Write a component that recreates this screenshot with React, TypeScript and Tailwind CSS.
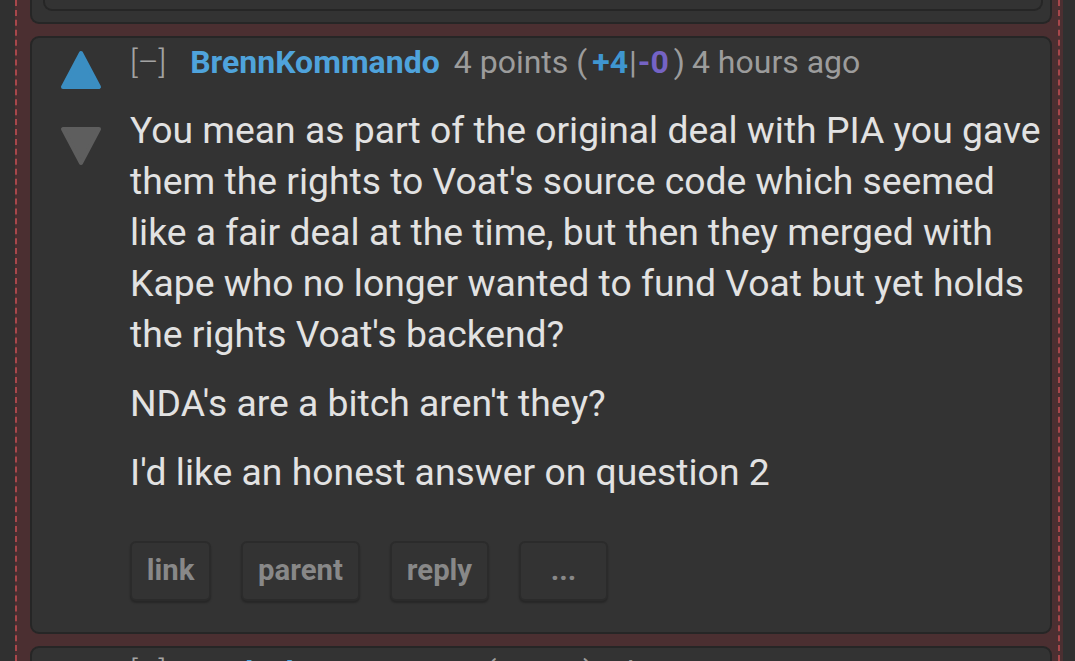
import { ReactNode } from 'react';

const buttons = [
  { label: 'link', width: 'w-[81px]' },
  { label: 'parent', width: 'w-[119px]' },
  { label: 'reply', width: 'w-[99px]' },
  { label: '...', width: 'w-[89px]' },
];

const paragraphs = [
  "You mean as part of the original deal with PIA you gave them the rights to Voat's source code which seemed like a fair deal at the time, but then they merged with Kape who no longer wanted to fund Voat but yet holds the rights Voat's backend?",
  "NDA's are a bitch aren't they?",
  "I'd like an honest answer on question 2",
];

function Arrow({ up, color }: { up: boolean; color: string }) {
  return (
    <svg width="42" height="40" viewBox="0 0 42 40">
      <polygon
        points={up ? '21,3 39,37 3,37' : '3,3 39,3 21,37'}
        fill={color}
        stroke={color}
        strokeWidth="4"
        strokeLinejoin="round"
      />
    </svg>
  );
}

function Header({ user, points, plus, minus, age }: { user: string; points: string; plus: string; minus: string; age: string }) {
  return (
    <div className="flex items-center h-[40px] text-[32px] leading-[40px] text-[#9c9c9c] whitespace-nowrap">
      <span className="text-[#a3a3a3] font-light">[–]</span>
      <span className="ml-[24px] font-bold text-[#4fa3dc]">{user}</span>
      <span className="ml-[14px]">{points} (</span>
      <span className="ml-[5px] font-bold text-[#3f96d0]">{plus}</span>
      <span className="mx-[1px]">|</span>
      <span className="font-bold text-[#7563c4]">{minus}</span>
      <span className="ml-[5px]">)</span>
      <span className="ml-[7px]">{age}</span>
    </div>
  );
}

function Card({ children, className }: { children: ReactNode; className?: string }) {
  return (
    <div className={`bg-[#333333] border-2 border-[#262626] rounded-[9px] ${className ?? ''}`}>
      {children}
    </div>
  );
}

export default function App() {
  return (
    <div className="h-[661px] overflow-hidden bg-[#303030]" style={{ fontFamily: 'Roboto, "Noto Sans", sans-serif' }}>
      <div className="ml-[15px] w-[1048px] h-full bg-[#4b2f31] pr-[3px]">
        <div className="h-full border-x-2 border-dashed border-[#a8474b] pl-[13px] pr-[6px] flex flex-col gap-[12px]">
          {/* previous comment, cut off at the top */}
          <div className="shrink-0 h-[24px] bg-[#333333] border-2 border-t-0 border-[#262626] rounded-b-[9px] pl-[11px] pr-[7px]">
            <div className="h-[11px] border-2 border-t-0 border-[#262626] rounded-b-[9px]" />
          </div>

          <Card className="shrink-0 h-[598px] flex pl-[28px] pt-[4px] pr-[2px]">
            <div className="w-[42px] pt-[8px] flex flex-col gap-[36px]">
              <Arrow up color="#3b8ec2" />
              <Arrow up={false} color="#5e5e5e" />
            </div>
            <div className="ml-[28px] flex-1 min-w-0">
              <Header user="BrennKommando" points="4 points" plus="+4" minus="-0" age="4 hours ago" />
              <div className="mt-[23px] text-[37.3px] leading-[51px] text-[#e2e2e2] flex flex-col gap-[18px]">
                {paragraphs.map(p => (
                  <p key={p}>{p}</p>
                ))}
              </div>
              <div className="mt-[43px] flex gap-[30px]">
                {buttons.map(b => (
                  <div
                    key={b.label}
                    className={`${b.width} h-[60px] flex items-center justify-center rounded-[6px] border-2 border-[#2b2b2b] bg-[#333333] shadow-[0_2px_2px_rgba(0,0,0,0.25)] text-[29.3px] font-bold text-[#888888]`}
                  >
                    {b.label}
                  </div>
                ))}
              </div>
            </div>
          </Card>

          <Card className="shrink-0 h-[200px] flex pl-[28px] pt-[4px]">
            <div className="w-[42px]" />
            <div className="ml-[28px] flex-1 min-w-0">
              <Header user="Buckwheat" points="3 points" plus="+3" minus="-0" age="3 hours ago" />
            </div>
          </Card>
        </div>
      </div>
    </div>
  );
}
